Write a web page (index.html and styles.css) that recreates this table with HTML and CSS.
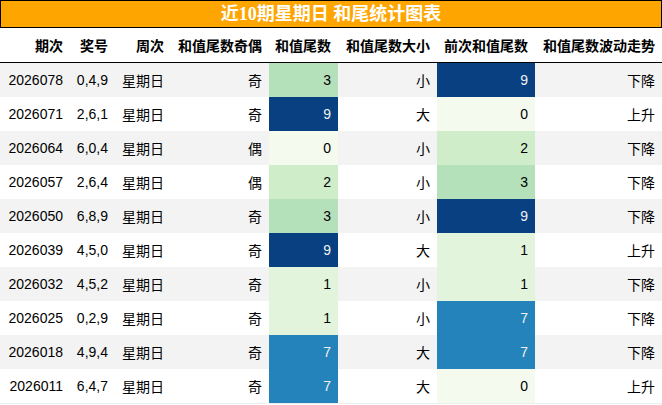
FILE: index.html
```html
<!DOCTYPE html>
<html lang="zh">
<head>
<meta charset="utf-8">
<title>近10期星期日 和尾统计图表</title>
<link rel="stylesheet" href="styles.css">
</head>
<body>
<div class="title">近10期星期日 和尾统计图表</div>
<table class="stats">
  <colgroup>
    <col class="c1"><col class="c2"><col class="c3"><col class="c4">
    <col class="c5"><col class="c6"><col class="c7"><col class="c8">
  </colgroup>
  <thead>
    <tr><th>期次</th><th>奖号</th><th>周次</th><th>和值尾数奇偶</th><th>和值尾数</th><th>和值尾数大小</th><th>前次和值尾数</th><th>和值尾数波动走势</th></tr>
  </thead>
  <tbody>
    <tr><td>2026078</td><td>0,4,9</td><td>星期日</td><td>奇</td><td class="v3">3</td><td>小</td><td class="v9">9</td><td>下降</td></tr>
    <tr><td>2026071</td><td>2,6,1</td><td>星期日</td><td>奇</td><td class="v9">9</td><td>大</td><td class="v0">0</td><td>上升</td></tr>
    <tr><td>2026064</td><td>6,0,4</td><td>星期日</td><td>偶</td><td class="v0">0</td><td>小</td><td class="v2">2</td><td>下降</td></tr>
    <tr><td>2026057</td><td>2,6,4</td><td>星期日</td><td>偶</td><td class="v2">2</td><td>小</td><td class="v3">3</td><td>下降</td></tr>
    <tr><td>2026050</td><td>6,8,9</td><td>星期日</td><td>奇</td><td class="v3">3</td><td>小</td><td class="v9">9</td><td>下降</td></tr>
    <tr><td>2026039</td><td>4,5,0</td><td>星期日</td><td>奇</td><td class="v9">9</td><td>大</td><td class="v1">1</td><td>上升</td></tr>
    <tr><td>2026032</td><td>4,5,2</td><td>星期日</td><td>奇</td><td class="v1">1</td><td>小</td><td class="v1">1</td><td>下降</td></tr>
    <tr><td>2026025</td><td>0,2,9</td><td>星期日</td><td>奇</td><td class="v1">1</td><td>小</td><td class="v7">7</td><td>下降</td></tr>
    <tr><td>2026018</td><td>4,9,4</td><td>星期日</td><td>奇</td><td class="v7">7</td><td>大</td><td class="v7">7</td><td>下降</td></tr>
    <tr><td>2026011</td><td>6,4,7</td><td>星期日</td><td>奇</td><td class="v7">7</td><td>大</td><td class="v0">0</td><td>上升</td></tr>
  </tbody>
</table>
</body>
</html>
```

FILE: styles.css
```css
html, body {
  margin: 0;
  padding: 0;
  background: #ffffff;
}

.title {
  box-sizing: border-box;
  height: 28px;
  border: 1px solid #000000;
  background: #ffa500;
  color: #ffffff;
  font-family: "Liberation Serif", "Noto Sans CJK SC", serif;
  font-weight: bold;
  font-size: 18px;
  line-height: 26px;
  text-align: center;
}

.stats {
  width: 662px;
  border-collapse: collapse;
  table-layout: fixed;
  font-family: "Liberation Sans", "Noto Sans CJK SC", sans-serif;
  font-size: 14px;
  color: #000000;
}

.c1 { width: 70px; }
.c2 { width: 45px; }
.c3 { width: 56px; }
.c4 { width: 98px; }
.c5 { width: 69px; }
.c6 { width: 99px; }
.c7 { width: 98px; }
.c8 { width: 127px; }

.stats th,
.stats td {
  padding: 0 7px 0 0;
  text-align: right;
  white-space: nowrap;
  vertical-align: middle;
}

.stats th {
  height: 34px;
  font-weight: bold;
  border-bottom: 1px solid #000000;
}

.stats td {
  height: 34px;
}

.stats tbody tr:nth-child(odd) {
  background: #f3f3f3;
}

.stats tbody tr:last-child td {
  border-bottom: 1px solid #eeeeee;
}

.stats td.v0 { background: #f4fbee; }
.stats td.v1 { background: #e2f4dc; }
.stats td.v2 { background: #d0edca; }
.stats td.v3 { background: #b4e1ba; }
.stats td.v7 { background: #2383ba; color: #f1f1f1; }
.stats td.v9 { background: #084081; color: #f1f1f1; }
```
